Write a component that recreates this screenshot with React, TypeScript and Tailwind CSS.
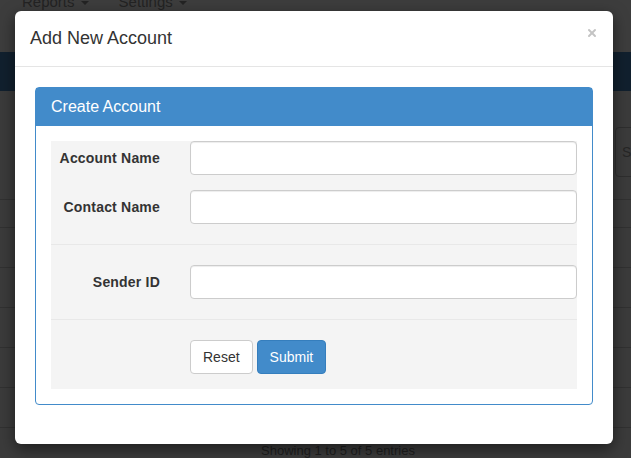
import { X } from 'lucide-react'

function Caret() {
  return (
    <span className="ml-[6px] inline-block h-0 w-0 border-x-[4px] border-t-[4px] border-x-transparent border-t-[#232323] align-middle" />
  )
}

function FormRow({ label }: { label: string }) {
  return (
    <div className="flex items-center">
      <label className="w-[124px] pr-[15px] text-right text-[14px] font-bold tracking-[0.2px] text-[#333]">
        {label}
      </label>
      <div className="flex-1 pl-[15px]">
        <input
          type="text"
          className="block h-[34px] w-full rounded-[4px] border border-[#ccc] bg-white px-[12px] text-[14px] shadow-[inset_0_1px_1px_rgba(0,0,0,0.075)] outline-none"
        />
      </div>
    </div>
  )
}

export default function App() {
  return (
    <div className="relative h-[458px] w-[631px] overflow-hidden bg-[#3b3b3b] font-['Liberation_Sans',Arial,sans-serif]">
      {/* page behind the backdrop */}
      <div className="h-[52px] overflow-hidden bg-[#3d3d3d]">
        <div className="-mt-[7px] flex gap-[30px] pl-[22px] text-[15px] leading-[18px] text-[#232323]">
          <span>
            Reports
            <Caret />
          </span>
          <span>
            Settings
            <Caret />
          </span>
        </div>
      </div>
      <div className="h-[39px] bg-[#11202e]" />
      <div className="flex h-[108px] justify-end pt-[36px]">
        <div className="-mr-[30px] flex h-[50px] w-[46px] items-center rounded-[4px] border border-[#2e2e2e] pl-[6px] text-[14px] text-[#262626]">
          S
        </div>
      </div>
      <div className="h-[28px] border-t border-[#313131]" />
      <div className="h-[40px] border-t border-[#313131]" />
      <div className="h-[40px] border-t border-[#313131]" />
      <div className="h-[40px] border-t border-[#313131]" />
      <div className="h-[40px] border-t border-[#313131]" />
      <div className="h-[40px] border-t border-[#313131]" />
      <div className="border-t border-[#313131] pt-[13px] pl-[261px] text-[13px] text-[#1e1e1e]">
        Showing 1 to 5 of 5 entries
      </div>

      {/* modal */}
      <div className="absolute left-[15px] top-[11px] w-[598px] rounded-[6px] bg-white shadow-[0_5px_15px_rgba(0,0,0,0.5)]">
        <div className="flex items-start justify-between border-b border-[#e5e5e5] p-[15px]">
          <h4 className="text-[18px] leading-[25px] text-[#333]">Add New Account</h4>
          <button className="mt-[1px] text-[#c4c4c4]">
            <X className="h-[12px] w-[12px]" strokeWidth={4} />
          </button>
        </div>

        <div className="px-[20px] pt-[20px] pb-[39px]">
          <div className="rounded-[4px] border border-[#428bca]">
            <div className="flex h-[38px] items-center border-b border-[#428bca] bg-[#428bca] px-[15px]">
              <h3 className="text-[16px] text-white">Create Account</h3>
            </div>
            <div className="p-[15px]">
              <div className="bg-[#f4f4f4]">
                <div className="flex flex-col gap-[15px] border-b border-[#e8e8e8] pb-[20px]">
                  <FormRow label="Account Name" />
                  <FormRow label="Contact Name" />
                </div>
                <div className="border-b border-[#e8e8e8] py-[20px]">
                  <FormRow label="Sender ID" />
                </div>
                <div className="flex gap-[4px] pt-[20px] pb-[15px] pl-[139px]">
                  <button className="h-[34px] rounded-[4px] border border-[#ccc] bg-white px-[12px] text-[14px] text-[#333]">
                    Reset
                  </button>
                  <button className="h-[34px] rounded-[4px] border border-[#357ebd] bg-[#428bca] px-[12px] text-[14px] text-white">
                    Submit
                  </button>
                </div>
              </div>
            </div>
          </div>
        </div>
      </div>
    </div>
  )
}
